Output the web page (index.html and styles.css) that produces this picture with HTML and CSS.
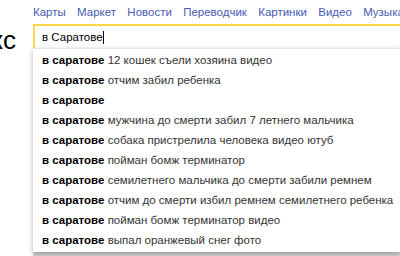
FILE: index.html
```html
<!DOCTYPE html>
<html lang="ru">
<head>
<meta charset="utf-8">
<link rel="stylesheet" href="styles.css">
</head>
<body>
<div class="page">
  <nav class="nav">
    <a class="tab">Карты</a>
    <a class="tab">Маркет</a>
    <a class="tab">Новости</a>
    <a class="tab">Переводчик</a>
    <a class="tab">Картинки</a>
    <a class="tab">Видео</a>
    <a class="tab">Музыка</a>
  </nav>
  <div class="main">
    <div class="logo"><span class="logo-text">Яндекс</span></div>
    <div class="search">
      <div class="input"><span class="query">в Саратове</span><span class="caret"></span></div>
      <ul class="suggest">
        <li class="item"><b>в саратове</b> 12 кошек съели хозяина видео</li>
        <li class="item"><b>в саратове</b> отчим забил ребенка</li>
        <li class="item"><b>в саратове</b></li>
        <li class="item"><b>в саратове</b> мужчина до смерти забил 7 летнего мальчика</li>
        <li class="item"><b>в саратове</b> собака пристрелила человека видео ютуб</li>
        <li class="item"><b>в саратове</b> пойман бомж терминатор</li>
        <li class="item"><b>в саратове</b> семилетнего мальчика до смерти забили ремнем</li>
        <li class="item"><b>в саратове</b> отчим до смерти избил ремнем семилетнего ребенка</li>
        <li class="item"><b>в саратове</b> пойман бомж терминатор видео</li>
        <li class="item"><b>в саратове</b> выпал оранжевый снег фото</li>
      </ul>
      <div class="below"></div>
    </div>
  </div>
</div>
</body>
</html>
```
FILE: styles.css
```css
html, body {
  margin: 0;
  padding: 0;
  background: #fff;
  overflow: hidden;
}
.page {
  width: 400px;
  height: 256px;
  overflow: hidden;
  font-family: "Liberation Sans", Arial, sans-serif;
  display: flex;
  flex-direction: column;
}
.nav {
  display: flex;
  gap: 11.3px;
  height: 24px;
  align-items: center;
  padding-left: 33px;
  white-space: nowrap;
  font-size: 11.5px;
}
.tab {
  color: #4a5bb5;
  text-decoration: none;
}
.main {
  display: flex;
  flex: 1;
}
.logo {
  width: 33px;
  flex: none;
  display: flex;
  justify-content: flex-end;
  overflow: hidden;
  padding-top: 3px;
}
.logo-text {
  font-size: 26px;
  color: #000;
  padding-right: 17px;
  line-height: 26px;
  white-space: nowrap;
}
.search {
  flex: 1;
  display: flex;
  flex-direction: column;
  min-width: 0;
}
.input {
  height: 22px;
  border-top: 2px solid #ffd84a;
  border-left: 2px solid #ffd84a;
  padding-left: 7px;
  display: flex;
  align-items: center;
  font-size: 11.5px;
  color: #000;
}
.caret {
  width: 1px;
  height: 13px;
  background: #000;
}
.suggest {
  list-style: none;
  margin: 0;
  padding: 1px 0 2px;
  border-top: 1px solid #e6e6e6;
  background: #fff;
  box-shadow: 0 2px 5px rgba(0,0,0,0.3);
  position: relative;
  z-index: 1;
}
.item {
  height: 20px;
  line-height: 20px;
  padding-left: 9px;
  font-size: 11.5px;
  color: #333;
  white-space: nowrap;
}
.item b {
  color: #000;
}
.below {
  flex: 1;
  background: #d6d6d6;
}
```
